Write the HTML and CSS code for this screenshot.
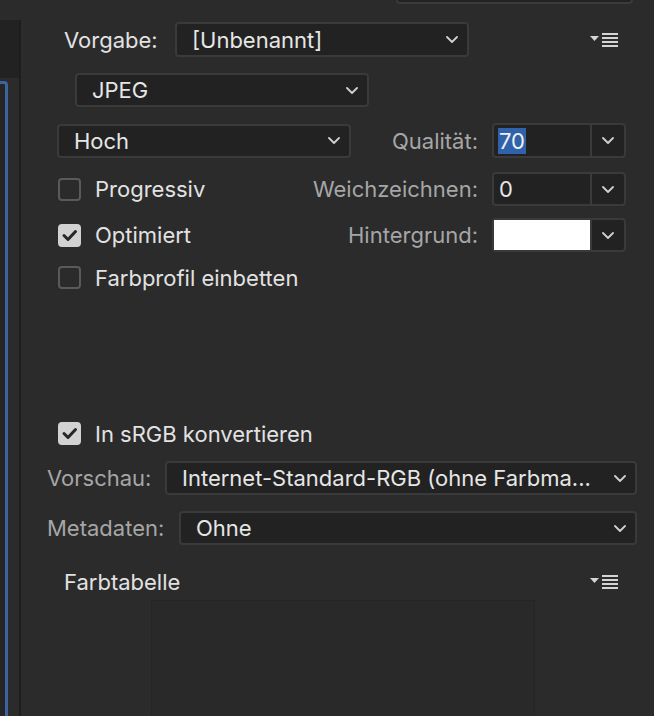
FILE: index.html
```html
<!DOCTYPE html>
<html lang="de">
<head>
<meta charset="utf-8">
<title>Für Web speichern</title>
<link rel="stylesheet" href="styles.css">
</head>
<body>
<div class="app">
  <div class="strip">
    <div class="strip-body">
      <div class="strip-block"></div>
      <div class="strip-frame"></div>
    </div>
  </div>
  <div class="panel">
    <div class="topfield"></div>

    <div class="row row-preset">
      <span class="label label-bright w-preset">Vorgabe:</span>
      <div class="select w-294 h-35"><span class="val">[Unbenannt]</span><svg class="chev" viewBox="0 0 12 7"><path d="M1 1 L6 6 L11 1"/></svg></div>
      <svg class="menu" viewBox="0 0 28 14"><path class="tri" d="M0 3 H9 L4.5 8 Z"/><rect x="12" y="0" width="16" height="2"/><rect x="12" y="4" width="16" height="2"/><rect x="12" y="8" width="16" height="2"/><rect x="12" y="12" width="16" height="2"/></svg>
    </div>

    <div class="row row-format">
      <div class="select w-294 h-34"><span class="val">JPEG</span><svg class="chev" viewBox="0 0 12 7"><path d="M1 1 L6 6 L11 1"/></svg></div>
    </div>

    <div class="opts">
      <div class="orow orow-1">
        <div class="ocol">
          <div class="select w-294 h-34"><span class="val">Hoch</span><svg class="chev" viewBox="0 0 12 7"><path d="M1 1 L6 6 L11 1"/></svg></div>
        </div>
        <span class="label label-dim olabel">Qualität:</span>
        <div class="combo h-35">
          <div class="combo-input"><span class="sel">70</span></div>
          <div class="combo-btn"><svg class="chev" viewBox="0 0 12 7"><path d="M1 1 L6 6 L11 1"/></svg></div>
        </div>
      </div>
      <div class="orow orow-2">
        <div class="ocol">
          <label class="check"><span class="box"></span><span class="ctext">Progressiv</span></label>
        </div>
        <span class="label label-dim olabel">Weichzeichnen:</span>
        <div class="combo h-34">
          <div class="combo-input"><span class="num">0</span></div>
          <div class="combo-btn"><svg class="chev" viewBox="0 0 12 7"><path d="M1 1 L6 6 L11 1"/></svg></div>
        </div>
      </div>
      <div class="orow orow-3">
        <div class="ocol">
          <label class="check"><span class="box on"><svg viewBox="0 0 23 23"><path d="M6 11.5 L10 15.5 L17.5 7.5"/></svg></span><span class="ctext">Optimiert</span></label>
        </div>
        <span class="label label-dim olabel">Hintergrund:</span>
        <div class="combo h-34">
          <div class="combo-input swatch-wrap"><span class="swatch"></span></div>
          <div class="combo-btn"><svg class="chev" viewBox="0 0 12 7"><path d="M1 1 L6 6 L11 1"/></svg></div>
        </div>
      </div>
      <div class="orow orow-4">
        <div class="ocol">
          <label class="check"><span class="box"></span><span class="ctext">Farbprofil einbetten</span></label>
        </div>
      </div>
    </div>

    <div class="row row-srgb">
      <label class="check"><span class="box on"><svg viewBox="0 0 23 23"><path d="M6 11.5 L10 15.5 L17.5 7.5"/></svg></span><span class="ctext">In sRGB konvertieren</span></label>
    </div>

    <div class="row row-preview">
      <span class="label label-dim w-preview">Vorschau:</span>
      <div class="select w-472 h-34"><span class="val">Internet-Standard-RGB (ohne Farbma...</span><svg class="chev" viewBox="0 0 12 7"><path d="M1 1 L6 6 L11 1"/></svg></div>
    </div>

    <div class="row row-meta">
      <span class="label label-dim w-meta">Metadaten:</span>
      <div class="select w-458 h-34"><span class="val">Ohne</span><svg class="chev" viewBox="0 0 12 7"><path d="M1 1 L6 6 L11 1"/></svg></div>
    </div>

    <div class="row row-table">
      <span class="label label-bright">Farbtabelle</span>
      <svg class="menu" viewBox="0 0 28 14"><path class="tri" d="M0 3 H9 L4.5 8 Z"/><rect x="12" y="0" width="16" height="2"/><rect x="12" y="4" width="16" height="2"/><rect x="12" y="8" width="16" height="2"/><rect x="12" y="12" width="16" height="2"/></svg>
    </div>

    <div class="colortable"></div>
  </div>
</div>
</body>
</html>
```

FILE: styles.css
```css
* { box-sizing: border-box; }

html, body {
  margin: 0;
  padding: 0;
  background: #2b2b2b;
}

body {
  width: 654px;
  height: 716px;
  overflow: hidden;
  font-family: Inter, "Noto Sans", "Liberation Sans", sans-serif;
  font-size: 22px;
  color: #e4e4e4;
}

.app {
  display: flex;
  width: 654px;
  height: 716px;
}

/* left strip */
.strip {
  width: 21px;
  flex: none;
  padding-top: 20px;
}

.strip-body {
  height: 100%;
  border-right: 2px solid #1e1e1e;
  overflow: hidden;
}

.strip-block {
  height: 58px;
  background: #222222;
}

.strip-frame {
  margin-top: 3px;
  margin-left: -10px;
  width: 18px;
  height: 700px;
  border: 3px solid #3b64a0;
  border-radius: 4px;
  background: #262626;
}

/* main panel */
.panel {
  flex: 1;
  display: flex;
  flex-direction: column;
  position: relative;
}

.topfield {
  position: absolute;
  left: 375px;
  top: -10px;
  width: 237px;
  height: 14px;
  border: 2px solid #3a3a3a;
  border-radius: 4px;
  background: #222222;
}

.row {
  display: flex;
  align-items: center;
  flex: none;
}

.label {
  white-space: nowrap;
  font-size: 22px;
}

.label-bright { color: #e2e2e2; }
.label-dim { color: #a6a6a6; }

.select {
  display: flex;
  align-items: center;
  justify-content: space-between;
  background: #222222;
  border: 2px solid #3a3a3a;
  border-radius: 4px;
  padding: 0 9px 0 15px;
  flex: none;
}

.val {
  color: #e6e6e6;
  white-space: nowrap;
  font-size: 22px;
}

.chev {
  width: 12px;
  height: 7px;
  flex: none;
}

.chev path {
  fill: none;
  stroke: #cfcfcf;
  stroke-width: 1.8;
  stroke-linecap: round;
  stroke-linejoin: round;
}

.w-294 { width: 294px; }
.w-472 { width: 472px; }
.w-458 { width: 458px; }
.h-35 { height: 35px; }
.h-34 { height: 34px; }

.menu {
  width: 28px;
  height: 14px;
  margin-left: auto;
  margin-right: 36px;
  flex: none;
}

.menu rect, .menu .tri { fill: #d4d4d4; }

/* rows */
.row-preset {
  margin-top: 22px;
  height: 35px;
  padding-left: 43px;
}

.w-preset { width: 111px; }

.row-format {
  margin-top: 16px;
  height: 34px;
  padding-left: 54px;
}

.opts {
  margin-top: 16px;
  display: flex;
  flex-direction: column;
}

.orow {
  display: flex;
  align-items: center;
}

.orow-1 { height: 35px; }
.orow-2 { height: 34px; margin-top: 14px; }
.orow-3 { height: 34px; margin-top: 12px; }
.orow-4 { height: 23px; margin-top: 14px; }

.ocol {
  padding-left: 36px;
  flex: none;
}

.olabel {
  margin-left: auto;
  margin-right: 14px;
}

.combo {
  width: 134px;
  margin-right: 28px;
  display: flex;
  background: #222222;
  border: 2px solid #3a3a3a;
  border-radius: 4px;
  flex: none;
}

.combo-input {
  width: 98px;
  display: flex;
  align-items: center;
  padding-left: 4px;
  border-right: 2px solid #3a3a3a;
}

.combo-btn {
  flex: 1;
  display: flex;
  align-items: center;
  justify-content: center;
}

.sel {
  background: #2f62aa;
  color: #f0f0f0;
  height: 26px;
  line-height: 26px;
  padding: 0 1px;
  font-size: 22px;
}

.num {
  color: #e6e6e6;
  padding-left: 1px;
  font-size: 22px;
}

.swatch-wrap { padding: 0; }

.swatch {
  display: block;
  width: 96px;
  height: 30px;
  background: #ffffff;
}

/* checkboxes */
.check {
  display: flex;
  align-items: center;
  margin-left: 1px;
}

.box {
  width: 23px;
  height: 23px;
  border: 2px solid #5a5a5a;
  border-radius: 4px;
  flex: none;
  display: flex;
  align-items: center;
  justify-content: center;
}

.box.on {
  background: #d2d2d2;
  border-color: #d2d2d2;
}

.box svg {
  width: 23px;
  height: 23px;
  flex: none;
}

.box svg path {
  fill: none;
  stroke: #262626;
  stroke-width: 3;
  stroke-linecap: round;
  stroke-linejoin: round;
}

.ctext {
  margin-left: 14px;
  color: #e2e2e2;
  font-size: 22px;
  white-space: nowrap;
}

.row-srgb {
  margin-top: 133px;
  height: 23px;
  padding-left: 36px;
}

.row-preview {
  margin-top: 16px;
  height: 34px;
  padding-left: 26px;
}

.w-preview { width: 118px; }

.row-meta {
  margin-top: 16px;
  height: 34px;
  padding-left: 26px;
}

.w-meta { width: 132px; }

.row-table {
  margin-top: 20px;
  height: 34px;
  padding-left: 43px;
}

.colortable {
  margin-top: 1px;
  margin-left: 130px;
  width: 384px;
  height: 140px;
  background: #292929;
  border: 1px solid #252525;
  flex: none;
}
```
